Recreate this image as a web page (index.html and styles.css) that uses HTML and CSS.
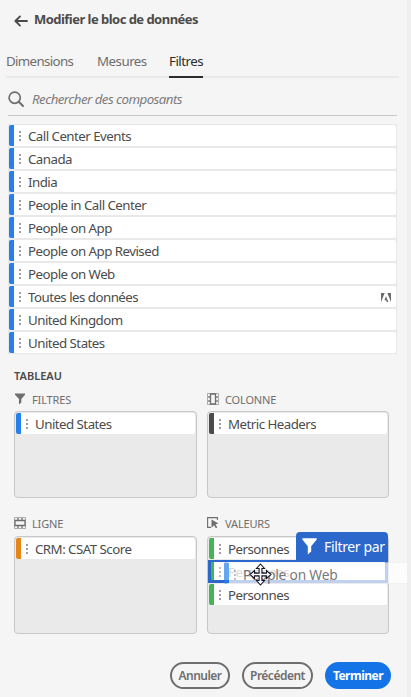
FILE: index.html
```
<!DOCTYPE html>
<html lang="fr">
<head>
<meta charset="utf-8">
<title>Modifier le bloc de données</title>
<link rel="stylesheet" href="styles.css">
</head>
<body>
<main class="app">
  <header class="header">
    <svg class="back" width="14" height="12" viewBox="0 0 14 12"><path d="M13 6H2M6 1.4L1.4 6L6 10.6" fill="none" stroke="#4b4b4b" stroke-width="1.9" stroke-linecap="round" stroke-linejoin="round"/></svg>
    <h1>Modifier le bloc de données</h1>
  </header>
  <nav class="tabs"><a class="t1">Dimensions</a><a class="t2">Mesures</a><a class="active">Filtres</a></nav>
  <div class="search">
    <svg width="17" height="17" viewBox="0 0 17 17"><circle cx="6.7" cy="6.7" r="5.6" fill="none" stroke="#6e6e6e" stroke-width="1.7"/><path d="M10.8 10.8L15 15" stroke="#6e6e6e" stroke-width="2" stroke-linecap="round"/></svg>
    <span class="placeholder">Rechercher des composants</span>
  </div>
  <div class="list">
    <div class="item blue"><i class="dots"></i><span>Call Center Events</span></div>
    <div class="item blue"><i class="dots"></i><span>Canada</span></div>
    <div class="item blue"><i class="dots"></i><span>India</span></div>
    <div class="item blue"><i class="dots"></i><span>People in Call Center</span></div>
    <div class="item blue"><i class="dots"></i><span>People on App</span></div>
    <div class="item blue"><i class="dots"></i><span>People on App Revised</span></div>
    <div class="item blue"><i class="dots"></i><span>People on Web</span></div>
    <div class="item blue"><i class="dots"></i><span>Toutes les données</span>
      <svg class="brand" width="10" height="9" viewBox="0 0 10 9"><path d="M0 0H3.7L0 9ZM6.3 0H10V9ZM5 3.2L7.4 9H5.8L5.1 7.2H3.4Z" fill="#6b6b6b"/></svg></div>
    <div class="item blue"><i class="dots"></i><span>United Kingdom</span></div>
    <div class="item blue"><i class="dots"></i><span>United States</span></div>
  </div>
  <h2>TABLEAU</h2>
  <div class="grid">
    <section>
      <div class="label"><svg width="12" height="12" viewBox="0 0 12 12"><path d="M1 .5H11V1.8L7.3 6V9.5L5 11.5V6L1 1.8Z" fill="#6e6e6e"/></svg><span>FILTRES</span></div>
      <div class="box"><div class="item blue"><i class="dots"></i><span>United States</span></div></div>
    </section>
    <section>
      <div class="label"><svg width="12" height="12" viewBox="0 0 12 12"><path d="M.5 .5H11.5V11.5H.5ZM0 4H12M0 8H12" fill="none" stroke="#ababab"/><path d="M3.5 1H8.5V11H3.5Z" fill="#f5f5f5" stroke="#6e6e6e" stroke-width="1.3"/><path d="M1 4H3.5M1 8H3.5M8.5 4H11M8.5 8H11" stroke="#6e6e6e"/></svg><span>COLONNE</span></div>
      <div class="box"><div class="item dark"><i class="dots"></i><span>Metric Headers</span></div></div>
    </section>
    <section>
      <div class="label"><svg width="12" height="12" viewBox="0 0 12 12"><path d="M.5 .5H11.5V11.5H.5ZM4 0V12M8 0V12" fill="none" stroke="#ababab"/><path d="M1 3.5H11V8.5H1Z" fill="#f5f5f5" stroke="#6e6e6e" stroke-width="1.3"/><path d="M4 1V3.5M8 1V3.5M4 8.5V11M8 8.5V11" stroke="#6e6e6e"/></svg><span>LIGNE</span></div>
      <div class="box tall"><div class="item orange"><i class="dots"></i><span>CRM: CSAT Score</span></div></div>
    </section>
    <section>
      <div class="label"><svg width="12" height="12" viewBox="0 0 12 12"><path d="M4 10.4H.6V.6H10.4V3" fill="none" stroke="#6e6e6e" stroke-width="1.1"/><path d="M4.5 2.5L11.5 6.6L8.5 7.3L10.3 10.5L8.8 11.3L7.1 8.2L4.5 10.8Z" fill="#6e6e6e"/></svg><span>VALEURS</span></div>
      <div class="box tall values">
        <div class="item green"><i class="dots"></i><span>Personnes</span></div>
        <div class="item green faded"><i class="dots"></i><span>Personnes</span></div>
        <div class="item green"><i class="dots"></i><span>Personnes</span></div>
        <div class="drop"></div>
        <div class="tip"><svg width="15" height="17" viewBox="0 0 15 17"><path d="M.3 .3H14.7V1.6L9.2 8.3V13.5L5.8 16.5V8.3L.3 1.6Z" fill="#fff"/></svg><span>Filtrer par</span></div>
        <div class="drag item"><i class="dots"></i><span>People on Web</span></div>
        <svg class="cursor" width="23" height="23" viewBox="0 0 23 23"><path d="M11.5 1L15.5 5.5H12.9V10.1H17.5V7.5L22 11.5L17.5 15.5V12.9H12.9V17.5H15.5L11.5 22L7.5 17.5H10.1V12.9H5.5V15.5L1 11.5L5.5 7.5V10.1H10.1V5.5H7.5Z" fill="#fff" stroke="#151527" stroke-width="1.1"/></svg>
      </div>
    </section>
  </div>
  <footer class="actions"><button class="b1">Annuler</button><button class="b2">Précédent</button><button class="b3">Terminer</button></footer>
</main>
</body>
</html>
```
FILE: styles.css
```
* { box-sizing: border-box; }
body { margin: 0; background: #efefef; font-family: "Noto Sans", sans-serif; font-size: 13.3px; color: #4b4b4b; overflow: hidden; }
.app { width: 407px; height: 697px; background: #f5f5f5; }
svg { flex: none; display: block; }
span { white-space: nowrap; }
.header { height: 44px; padding: 0 0 6px 14px; display: flex; align-items: center; gap: 6px; }
.back { margin-top: 3px; }
h1 { margin: 0; font-size: 13px; line-height: 20px; font-weight: 700; letter-spacing: -.53px; white-space: nowrap; }
.tabs { margin-left: 6px; width: 393px; height: 34px; border-bottom: 2px solid #e9e9e9; display: flex; line-height: 35px; color: #6e6e6e; letter-spacing: -.5px; }
.tabs a { height: 34px; white-space: nowrap; }
.tabs .t1 { width: 91px; letter-spacing: -.65px; }
.tabs .t2 { width: 72px; }
.tabs .active { width: 34px; color: #2c2c2c; border-bottom: 2px solid #2c2c2c; }
.search { margin-left: 8px; width: 389px; height: 38px; border-bottom: 1px solid #c8c8c8; display: flex; align-items: center; padding-top: 5px; gap: 7px; }
.placeholder { font-style: italic; color: #7c7c7c; letter-spacing: -.55px; }
.list { margin: 8px 0 0 8px; width: 389px; height: 230px; padding: 1px; background: #e9e9e9; display: flex; flex-direction: column; gap: 2px; }
.item { height: 21px; flex: none; display: flex; align-items: center; background: #fff; border-left: 5px solid #2680eb; border-radius: 2px; line-height: 20px; letter-spacing: -.53px; }
.item span { padding-top: 1px; }
.dots { flex: none; width: 2px; height: 10px; margin: 0 7px 0 5px; background: repeating-linear-gradient(#9f9f9f 0 2px, transparent 2px 4px); }
.dark { border-color: #4b4b4b; }
.orange { border-color: #e68619; }
.green { border-color: #44b556; }
.brand { margin: 1px 5px 0 auto; }
h2 { margin: 12px 0 0 14px; font-size: 11px; line-height: 20px; font-weight: 600; letter-spacing: 0; }
.grid { margin: 5px 0 0 14px; display: grid; grid-template-columns: 183px 182px; column-gap: 10px; row-gap: 17px; }
.label { height: 20px; display: flex; align-items: center; gap: 6px; font-size: 11px; letter-spacing: -.15px; color: #6e6e6e; padding-bottom: 4px; }
.box { height: 87px; border: 1px solid #c8c8c8; border-radius: 4px; background: #eaeaea; padding: 1px; }
.tall { height: 98px; margin-top: 1px; }
.values { position: relative; display: flex; flex-direction: column; gap: 2px; }
.faded span, .faded .dots { opacity: .7; }
.drop { position: absolute; left: 0; top: 23px; width: 180px; height: 23px; border: 3px solid #2c67cc; border-top-width: 2px; }
.tip { position: absolute; left: 88px; top: -5px; width: 92px; height: 30px; border-radius: 4px 4px 0 0; background: #2c67cc; color: #fff; display: flex; align-items: center; gap: 7px; padding: 0 0 2px 6px; font-size: 14px; letter-spacing: -.35px; }
.drag { position: absolute; left: 16px; top: 25px; width: 183px; height: 22px; background: rgba(255,255,255,.7); background-clip: padding-box; border-left-color: rgba(38,128,235,.7); border-top: 1px solid #ececec80; border-bottom: 1px solid #eeeeee80; font-size: 13.8px; letter-spacing: -.2px; }
.drag .dots { opacity: .65; margin-top: 3px; }
.drag span { opacity: .75; padding-top: 3px; }
.cursor { position: absolute; left: 41px; top: 26px; }
.actions { margin: 28px 0 0 170px; display: flex; height: 27px; gap: 12px; }
button { padding: 0; border: 2px solid #6e6e6e; border-radius: 14px; background: #f5f5f5; font: 600 12px "Noto Sans", sans-serif; letter-spacing: -.5px; color: #6e6e6e; white-space: nowrap; }
.b1 { width: 60px; }
.b2 { width: 71px; }
.b3 { width: 66px; background: #1473e6; border-color: #1473e6; color: #fff; font-weight: 700; }
```
